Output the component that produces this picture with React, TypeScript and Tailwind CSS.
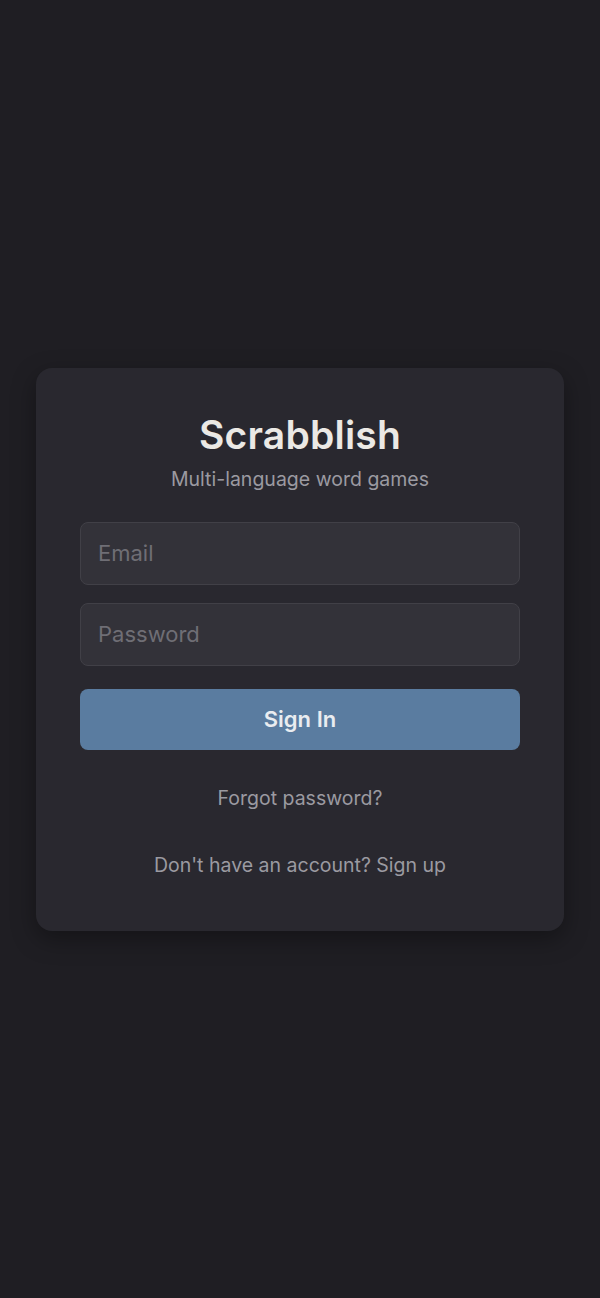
export default function App() {
  return (
    <div className="min-h-screen w-full bg-[#1f1e23] flex items-center justify-center px-9 font-['Inter','Noto_Sans',sans-serif]">
      <div className="w-full h-[563px] rounded-2xl bg-[#29282f] shadow-[0_8px_24px_rgba(0,0,0,0.35)] px-11 pt-[44px] flex flex-col">
        <h1 className="text-center text-[39px] leading-[46px] font-semibold text-[#ebe9e5] tracking-[0.2px]">
          Scrabblish
        </h1>
        <p className="mt-[8px] text-center text-[19.5px] leading-[26px] text-[#9b9aa1]">
          Multi-language word games
        </p>

        <form className="mt-[30px] flex flex-col" onSubmit={e => e.preventDefault()}>
          <input
            type="email"
            placeholder="Email"
            className="h-[63px] w-full rounded-lg border border-[#414047] bg-[#333239] px-[17px] text-[22px] text-[#ebe9e5] placeholder:text-[#6f6e75] outline-none"
          />
          <input
            type="password"
            placeholder="Password"
            className="mt-[18px] h-[63px] w-full rounded-lg border border-[#414047] bg-[#333239] px-[17px] text-[22px] text-[#ebe9e5] placeholder:text-[#6f6e75] outline-none"
          />
          <button
            type="submit"
            className="mt-[23px] h-[61px] w-full rounded-lg bg-[#5a7ca0] text-[22px] font-semibold text-[#e9ecf0]"
          >
            Sign In
          </button>
        </form>

        <a href="#" className="mt-[35px] text-center text-[19.5px] leading-[26px] text-[#9b9aa1]">
          Forgot password?
        </a>
        <p className="mt-[41px] text-center text-[19.5px] leading-[26px] text-[#9b9aa1]">
          Don't have an account? Sign up
        </p>
      </div>
    </div>
  );
}
